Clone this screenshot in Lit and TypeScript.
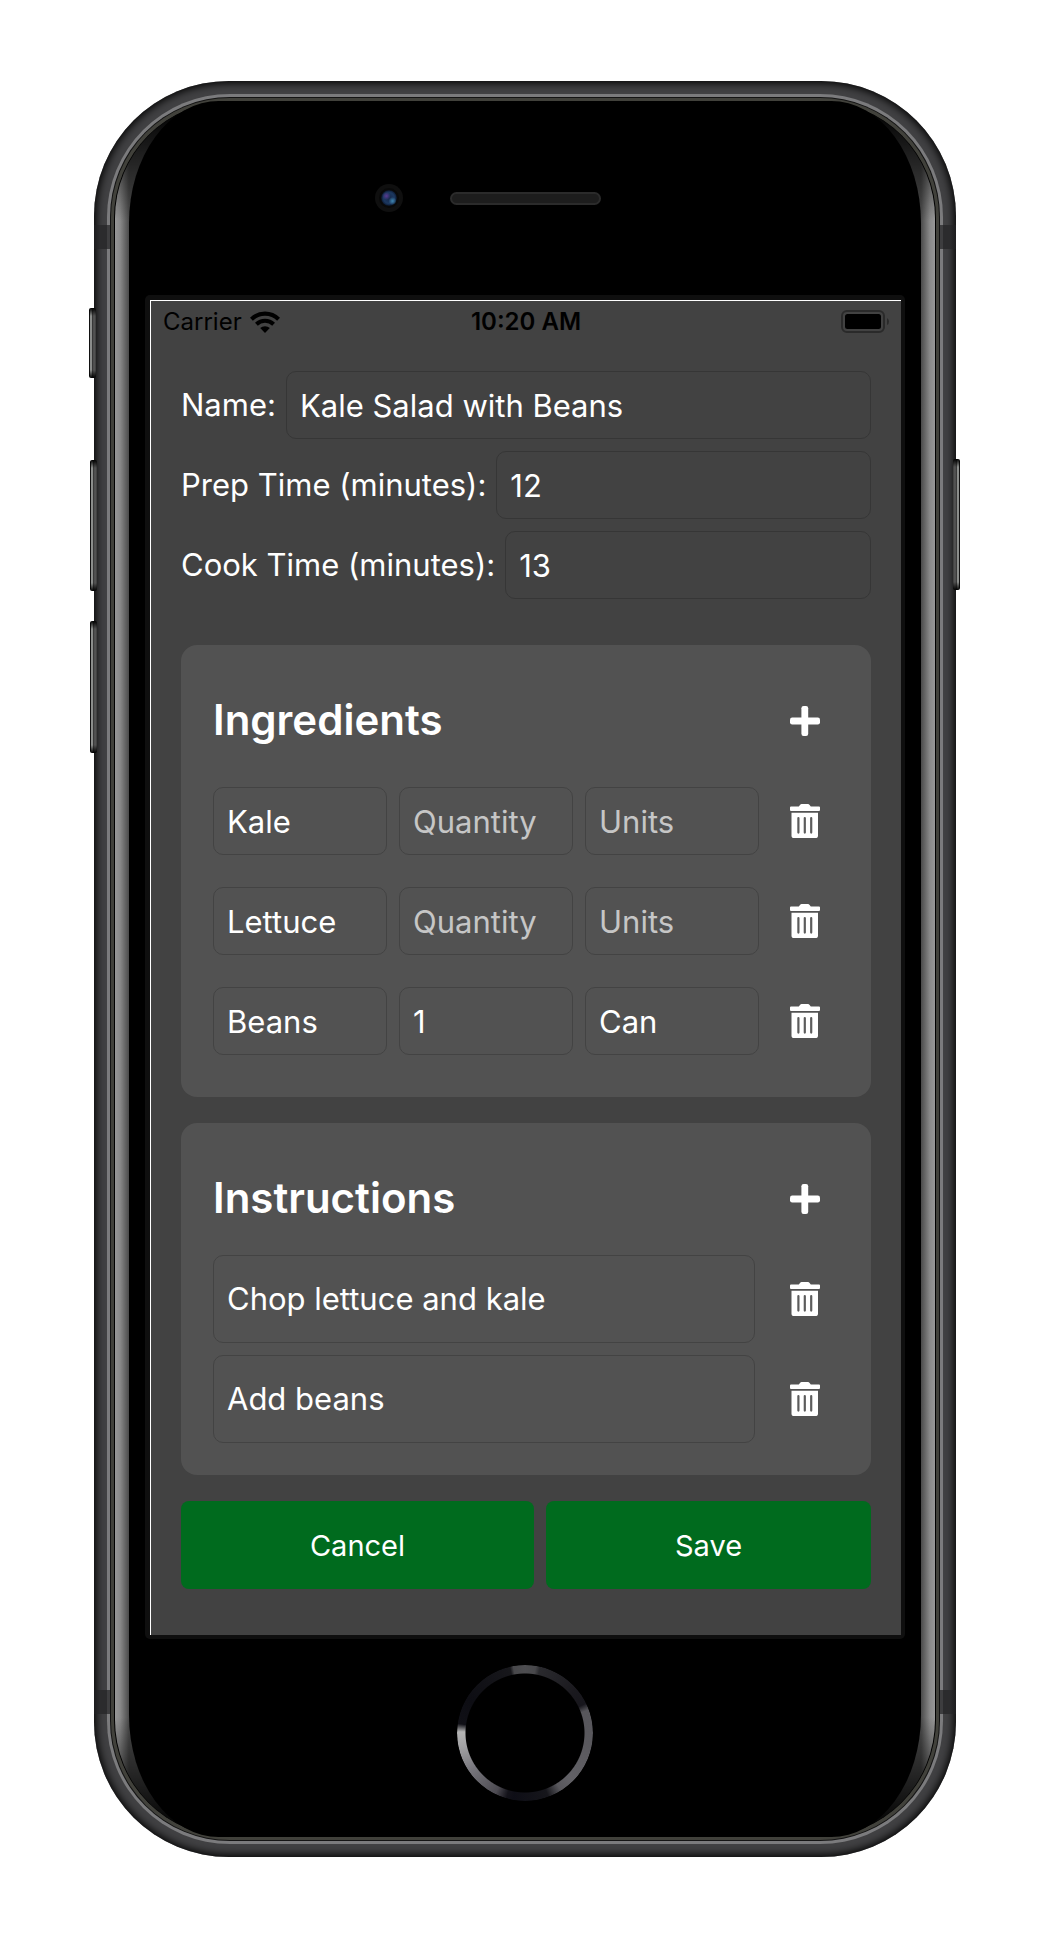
import { LitElement, html, svg, css } from "lit";
import { customElement, property, state } from "lit/decorators.js";

interface Ingredient {
  name: string;
  quantity: string;
  units: string;
}

const plusIcon = svg`
  <svg class="icon" width="30" height="30" viewBox="0 0 30 30" fill="#fff" aria-hidden="true">
    <rect x="11.4" y="0" width="6.8" height="30" rx="2.2" />
    <rect x="0" y="11.6" width="30" height="6.8" rx="2.2" />
  </svg>`;

const trashIcon = svg`
  <svg class="icon" width="30" height="34" viewBox="0 0 30 34" aria-hidden="true">
    <path fill="#fff" d="M1 2.4H8.8L10.2 .7Q10.7 0 11.6 0H18Q18.9 0 19.4 .7L20.8 2.4H29Q30 2.4 30 3.4V6Q30 7 29 7H1Q0 7 0 6V3.4Q0 2.4 1 2.4Z" />
    <path fill="#fff" d="M1.5 8.8H28V31.4Q28 34 25.4 34H4.1Q1.5 34 1.5 31.4Z" />
    <path stroke="#5c5c5c" stroke-width="2.2" stroke-linecap="round" d="M8.4 14V28.6M14.8 14V28.6M21.2 14V28.6" />
  </svg>`;

@customElement("status-bar")
export class StatusBar extends LitElement {
  static styles = css`
    :host {
      display: grid;
      grid-template-columns: 1fr auto 1fr;
      align-items: center;
      padding: 0 12px;
      color: #000;
      font-size: 24px;
      line-height: 38px;
    }
    .left {
      display: flex;
      align-items: center;
      gap: 8px;
    }
    .left,
    .time {
      padding-top: 2px;
    }
    .time {
      font-weight: 600;
    }
    .battery {
      justify-self: end;
    }
    svg {
      display: block;
    }
  `;

  render() {
    return html`
      <span class="left">
        Carrier
        <svg width="30" height="22" viewBox="0 0 30 22" fill="none" stroke="#000" role="img" aria-label="Wi-Fi">
          <path stroke-width="4.2" d="M1.4 8.2A19.4 19.4 0 0 1 28.6 8.2" />
          <path stroke-width="4" d="M6.4 13.2A12.4 12.4 0 0 1 23.6 13.2" />
          <path fill="#000" stroke="none" d="M15 22L10.2 17.1A6.9 6.9 0 0 1 19.8 17.1Z" />
        </svg>
      </span>
      <span class="time">10:20 AM</span>
      <svg class="battery" width="48" height="23" viewBox="0 0 48 23" role="img" aria-label="Battery full">
        <rect x="1" y="1" width="42" height="21" rx="5" fill="none" stroke="#2a2a2a" stroke-width="2" />
        <rect x="4" y="4" width="36" height="15" rx="2.5" fill="#000" />
        <path d="M46 8Q48 9 48 11.5T46 15Z" fill="#2a2a2a" />
      </svg>
    `;
  }
}

@customElement("phone-frame")
export class PhoneFrame extends LitElement {
  static styles = css`
    :host {
      display: block;
      position: relative;
    }
    .body {
      position: relative;
      padding: 13px;
      border-radius: 135px;
      background: #414143;
      box-shadow: inset 0 0 9px 2px #000;
    }
    .rim {
      padding: 3px;
      border-radius: 123px;
      background: #7b7b7d;
    }
    .seam {
      padding: 1px;
      border-radius: 120px;
      background: #141414;
    }
    .gasket {
      padding: 3px;
      border-radius: 119px;
      background: #41413b;
    }
    .edge {
      padding: 0 1px;
      border-radius: 117px;
      background: #000;
    }
    .bevel {
      padding: 0 14px;
      border-radius: 116px / 117px;
      background:
        linear-gradient(to bottom, #000 6px, transparent 120px, transparent calc(100% - 120px), #000 calc(100% - 6px)),
        linear-gradient(to right, #979797, #8a8a8a 5px, #4a4a4a 14px, #4a4a4a 50px, #4a4a4a calc(100% - 50px), #4a4a4a calc(100% - 14px), #8a8a8a calc(100% - 5px), #979797);
    }
    .panel {
      padding: 0 16px;
      border-radius: 90px / 122px;
      background: #000;
    }
    .top {
      display: grid;
      grid-template-columns: 1fr auto 1fr;
      align-items: center;
      height: 194px;
    }
    .camera {
      justify-self: end;
      margin-right: 47px;
    }
    .speaker {
      width: 151px;
      height: 13px;
      box-sizing: border-box;
      border: 2px solid #2b2b2b;
      border-radius: 7px;
      background: #1d1d1d;
    }
    .screen {
      padding: 5px 4px 4px 5px;
      border-radius: 5px;
      background: #0f0f0f;
    }
    .bottom {
      display: flex;
      justify-content: center;
      padding: 26px 0 36px;
    }
    .home {
      width: 136px;
      height: 136px;
      border: 0;
      padding: 0;
      border-radius: 50%;
      background: conic-gradient(
        #4d4d50 0deg, #48484b 9deg, #2a2a2e 13deg, #1a191e 50deg, #17161c 64deg,
        #57565b 70deg, #5a595e 100deg, #626166 135deg, #58575c 148deg, #16161b 160deg,
        #0e0e16 190deg, #131219 196deg, #4d4b52 206deg, #78777d 236deg, #a2a2a4 258deg,
        #b4b4b4 271deg, #101016 278deg, #0d0d13 300deg, #17171b 347deg, #48484b 350deg, #4d4d50 360deg
      );
      -webkit-mask: radial-gradient(circle, transparent 59px, #000 60px);
      mask: radial-gradient(circle, transparent 59px, #000 60px);
    }
    .key {
      position: absolute;
      width: 7px;
      border-radius: 2px;
      background:
        linear-gradient(to bottom, #000, transparent 8px, transparent calc(100% - 8px), #000),
        linear-gradient(to right, #111 1px, #8b8d8b 1px, #8b8d8b 3px, #2d2d2d 3px, #5a5a5a 5px, #3a3a3a 7px);
    }
    .mute {
      left: -5px;
      top: 227px;
      height: 70px;
    }
    .up {
      left: -4px;
      top: 379px;
      height: 131px;
    }
    .down {
      left: -4px;
      top: 540px;
      height: 132px;
    }
    .power {
      right: -4px;
      top: 378px;
      height: 131px;
      transform: scaleX(-1);
    }
    .band {
      position: absolute;
      width: 16px;
      height: 24px;
      background: linear-gradient(to right, #1c1c1e, #2b2b2d 6px, #2b2b2d 13px, #3d3d3f 13px);
    }
    .band-start {
      left: 0;
    }
    .band-end {
      right: 0;
      transform: scaleX(-1);
    }
    .band-top {
      top: 144px;
    }
    .band-bottom {
      bottom: 143px;
    }
  `;

  render() {
    return html`
      <div class="body">
        <div class="rim"><div class="seam"><div class="gasket"><div class="edge"><div class="bevel">
          <div class="panel">
            <div class="top">
              <svg class="camera" width="28" height="28" viewBox="0 0 28 28" aria-hidden="true">
                <defs>
                  <radialGradient id="lens" cx=".5" cy=".5" r=".5">
                    <stop offset="0" stop-color="#16284a" />
                    <stop offset=".7" stop-color="#1c3860" />
                    <stop offset="1" stop-color="#0c1a33" />
                  </radialGradient>
                  <radialGradient id="flare">
                    <stop offset="0" stop-color="#3f86b0" />
                    <stop offset="1" stop-color="#3f86b0" stop-opacity="0" />
                  </radialGradient>
                  <radialGradient id="violet">
                    <stop offset="0" stop-color="#5a3a92" />
                    <stop offset="1" stop-color="#5a3a92" stop-opacity="0" />
                  </radialGradient>
                </defs>
                <circle cx="14" cy="14" r="14" fill="#0f0f0f" />
                <circle cx="14" cy="14" r="10" fill="#090909" />
                <circle cx="14" cy="14" r="7.8" fill="url(#lens)" />
                <circle cx="11.5" cy="12" r="4" fill="url(#violet)" />
                <circle cx="17.5" cy="17" r="4" fill="url(#flare)" />
              </svg>
              <span class="speaker"></span>
            </div>
            <div class="screen"><slot></slot></div>
            <div class="bottom"><button class="home" aria-label="Home"></button></div>
          </div>
        </div></div></div></div></div>
        <span class="band band-start band-top"></span>
        <span class="band band-end band-top"></span>
        <span class="band band-start band-bottom"></span>
        <span class="band band-end band-bottom"></span>
      </div>
      <span class="key mute"></span>
      <span class="key up"></span>
      <span class="key down"></span>
      <span class="key power"></span>
    `;
  }
}

@customElement("recipe-form")
export class RecipeForm extends LitElement {
  @property() name = "";
  @property() prep = "";
  @property() cook = "";
  @state() private ingredients: Ingredient[] = [
    { name: "Kale", quantity: "", units: "" },
    { name: "Lettuce", quantity: "", units: "" },
    { name: "Beans", quantity: "1", units: "Can" },
  ];
  @state() private steps: string[] = ["Chop lettuce and kale", "Add beans"];

  static styles = css`
    :host {
      display: block;
      padding: 30px 30px 46px;
      color: #fff;
      font-size: 31px;
    }
    form {
      display: flex;
      flex-direction: column;
      gap: 26px;
    }
    .fields {
      display: flex;
      flex-direction: column;
      gap: 12px;
      margin-bottom: 20px;
    }
    .field {
      display: flex;
      align-items: center;
      gap: 10px;
    }
    .field label {
      padding-bottom: 2px;
    }
    .field input {
      flex: 1;
    }
    input,
    textarea {
      box-sizing: border-box;
      min-width: 0;
      width: 100%;
      height: 68px;
      margin: 0;
      padding: 0 13px;
      border: 1px solid #363636;
      border-radius: 10px;
      background: transparent;
      color: inherit;
      font: inherit;
      outline: none;
    }
    textarea {
      display: block;
      height: 88px;
      padding: 23px 13px;
      line-height: 40px;
      resize: none;
      overflow: hidden;
    }
    .card input,
    .card textarea {
      border-color: #434343;
    }
    ::placeholder {
      color: #c6c6c6;
      opacity: 1;
    }
    .card {
      display: flex;
      flex-direction: column;
      gap: 12px;
      padding: 32px;
      border-radius: 16px;
      background: #525252;
    }
    .head {
      display: flex;
      align-items: center;
      justify-content: space-between;
    }
    h2 {
      margin: 0;
      padding-bottom: 2px;
      font-size: 42px;
      font-weight: 600;
      line-height: 84px;
    }
    .tool {
      display: grid;
      place-items: center;
      width: 68px;
      height: 88px;
      padding: 0;
      border: 0;
      background: none;
      cursor: pointer;
    }
    .icon {
      display: block;
    }
    .ingredient {
      display: grid;
      grid-template-columns: 1fr 1fr 1fr auto;
      align-items: center;
      gap: 12px;
    }
    .step {
      display: grid;
      grid-template-columns: 1fr auto;
      align-items: center;
      gap: 16px;
    }
    .actions {
      display: flex;
      gap: 12px;
    }
    .action {
      flex: 1 1 auto;
      height: 88px;
      padding: 0 24px;
      border: 0;
      border-radius: 8px;
      background: #006b1e;
      color: #fff;
      font: inherit;
      font-size: 29px;
      cursor: pointer;
    }
  `;

  private addIngredient() {
    this.ingredients = [...this.ingredients, { name: "", quantity: "", units: "" }];
  }

  private removeIngredient(index: number) {
    this.ingredients = this.ingredients.filter((_, i) => i !== index);
  }

  private addStep() {
    this.steps = [...this.steps, ""];
  }

  private removeStep(index: number) {
    this.steps = this.steps.filter((_, i) => i !== index);
  }

  render() {
    return html`
      <form @submit=${(e: Event) => e.preventDefault()}>
        <div class="fields">
          <div class="field">
            <label for="name">Name:</label>
            <input id="name" type="text" .value=${this.name} />
          </div>
          <div class="field">
            <label for="prep">Prep Time (minutes):</label>
            <input id="prep" type="text" inputmode="numeric" .value=${this.prep} />
          </div>
          <div class="field">
            <label for="cook">Cook Time (minutes):</label>
            <input id="cook" type="text" inputmode="numeric" .value=${this.cook} />
          </div>
        </div>

        <section class="card">
          <div class="head">
            <h2>Ingredients</h2>
            <button class="tool" type="button" aria-label="Add ingredient" @click=${this.addIngredient}>${plusIcon}</button>
          </div>
          ${this.ingredients.map(
            (item, i) => html`
              <div class="ingredient">
                <input type="text" aria-label="Ingredient" placeholder="Name" .value=${item.name} />
                <input type="text" aria-label="Quantity" placeholder="Quantity" .value=${item.quantity} />
                <input type="text" aria-label="Units" placeholder="Units" .value=${item.units} />
                <button class="tool" type="button" aria-label="Remove ingredient" @click=${() => this.removeIngredient(i)}>
                  ${trashIcon}
                </button>
              </div>
            `
          )}
        </section>

        <section class="card">
          <div class="head">
            <h2>Instructions</h2>
            <button class="tool" type="button" aria-label="Add instruction" @click=${this.addStep}>${plusIcon}</button>
          </div>
          ${this.steps.map(
            (step, i) => html`
              <div class="step">
                <textarea rows="1" aria-label="Instruction" .value=${step}></textarea>
                <button class="tool" type="button" aria-label="Remove instruction" @click=${() => this.removeStep(i)}>
                  ${trashIcon}
                </button>
              </div>
            `
          )}
        </section>

        <div class="actions">
          <button class="action" type="button">Cancel</button>
          <button class="action" type="submit">Save</button>
        </div>
      </form>
    `;
  }
}

@customElement("app-root")
export class AppRoot extends LitElement {
  static styles = css`
    :host {
      display: block;
      padding: 81px 94px 77px;
      background: #fff;
      font-family: Inter, "Liberation Sans", sans-serif;
    }
    .phone {
      max-width: 862px;
      margin: 0 auto;
    }
    .view {
      border-top: 1px solid #fff;
      border-left: 1px solid #fff;
      background: #424242;
    }
  `;

  render() {
    return html`
      <phone-frame class="phone">
        <div class="view">
          <status-bar></status-bar>
          <recipe-form name="Kale Salad with Beans" prep="12" cook="13"></recipe-form>
        </div>
      </phone-frame>
    `;
  }
}
